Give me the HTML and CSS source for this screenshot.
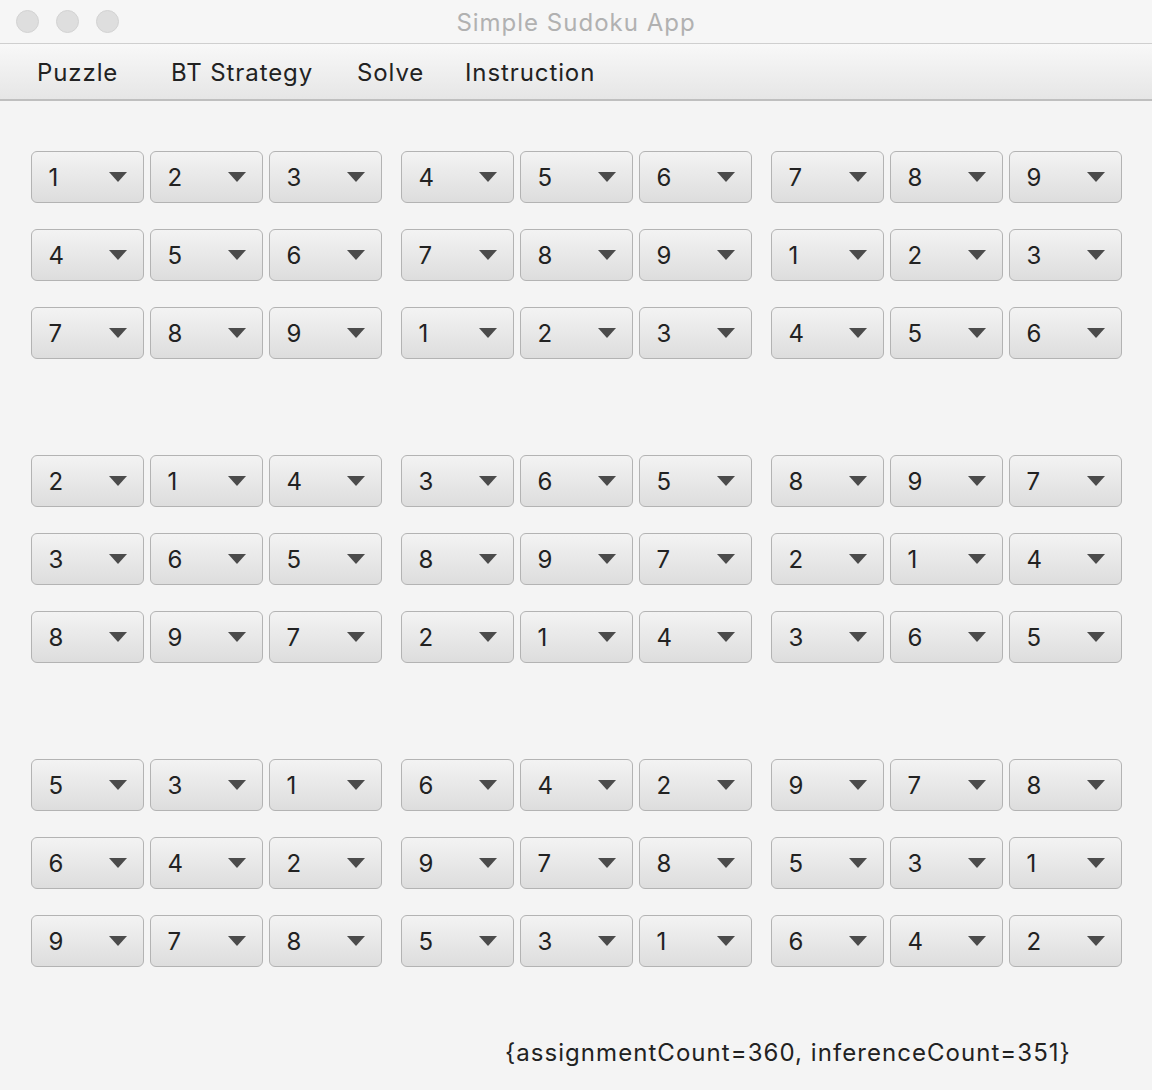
FILE: index.html
```html
<!DOCTYPE html>
<html>
<head>
<meta charset="utf-8">
<link rel="stylesheet" href="styles.css">
</head>
<body>
<div class="window">
  <div class="titlebar">
    <div class="lights"><span class="light"></span><span class="light"></span><span class="light"></span></div>
    <div class="title">Simple Sudoku App</div>
  </div>
  <div class="menubar">
    <span class="menu">Puzzle</span>
    <span class="menu">BT Strategy</span>
    <span class="menu">Solve</span>
    <span class="menu">Instruction</span>
  </div>
  <div class="content">
    <div class="board" id="board"></div>
    <div class="footer">{assignmentCount=360, inferenceCount=351}</div>
  </div>
</div>
<script src="app.js"></script>
</body>
</html>
```
FILE: app.js
```js
var rows = [
  [1,2,3,4,5,6,7,8,9],
  [4,5,6,7,8,9,1,2,3],
  [7,8,9,1,2,3,4,5,6],
  [2,1,4,3,6,5,8,9,7],
  [3,6,5,8,9,7,2,1,4],
  [8,9,7,2,1,4,3,6,5],
  [5,3,1,6,4,2,9,7,8],
  [6,4,2,9,7,8,5,3,1],
  [9,7,8,5,3,1,6,4,2]
];
var board = document.getElementById('board');
for (var br = 0; br < 3; br++) {
  var band = document.createElement('div');
  band.className = 'band';
  for (var bc = 0; bc < 3; bc++) {
    var block = document.createElement('div');
    block.className = 'block';
    for (var r = 0; r < 3; r++) {
      for (var c = 0; c < 3; c++) {
        var cell = document.createElement('div');
        cell.className = 'cell';
        var v = document.createElement('span');
        v.className = 'value';
        v.textContent = rows[br * 3 + r][bc * 3 + c];
        var a = document.createElement('span');
        a.className = 'arrow';
        cell.appendChild(v);
        cell.appendChild(a);
        block.appendChild(cell);
      }
    }
    band.appendChild(block);
  }
  board.appendChild(band);
}
```
FILE: styles.css
```css
html, body {
  margin: 0;
  padding: 0;
  background: #f4f4f4;
}
body {
  font-family: Inter, "Liberation Sans", sans-serif;
  color: #222;
}
.window {
  width: 1152px;
  height: 1090px;
  background: #f4f4f4;
}
.titlebar {
  height: 43px;
  background: #f6f6f6;
  border-bottom: 1px solid #cfcfcf;
  display: flex;
  align-items: center;
  position: relative;
}
.lights {
  display: flex;
  gap: 17px;
  padding-left: 16px;
}
.light {
  width: 23px;
  height: 23px;
  border-radius: 50%;
  background: #dedede;
  box-sizing: border-box;
  border: 1px solid #d3d3d3;
}
.title {
  position: absolute;
  left: 0;
  right: 0;
  top: 1px;
  line-height: 44px;
  text-align: center;
  font-size: 24px;
  letter-spacing: 1px;
  color: #b1b1b1;
  pointer-events: none;
}
.menubar {
  height: 57px;
  box-sizing: border-box;
  padding-top: 2px;
  background: linear-gradient(#f8f8f8, #e6e6e6);
  border-bottom: 2px solid #bfbfbf;
  display: grid;
  grid-template-columns: 134px 186px 108px auto;
  align-items: center;
  padding-left: 37px;
  font-size: 24px;
  letter-spacing: 0.9px;
  color: #222;
}
.content {
  padding: 50px 0 0 31px;
}
.board {
  display: flex;
  flex-direction: column;
  gap: 96px;
}
.band {
  display: flex;
  gap: 19px;
}
.block {
  display: grid;
  grid-template-columns: repeat(3, 113px);
  column-gap: 6px;
  row-gap: 26px;
}
.cell {
  height: 52px;
  box-sizing: border-box;
  border: 1.5px solid #b3b3b3;
  border-radius: 6px;
  background: linear-gradient(#f3f3f3, #dddddd);
  display: flex;
  align-items: center;
  padding-left: 16.5px;
  padding-right: 16px;
  font-size: 24px;
  color: #222;
}
.value {
  flex: 1;
}
.arrow {
  width: 0;
  height: 0;
  border-left: 9px solid transparent;
  border-right: 9px solid transparent;
  border-top: 10px solid #4b4b4b;
}
.footer {
  margin-top: 71px;
  padding-left: 474px;
  font-size: 24px;
  letter-spacing: 1.05px;
  line-height: 30px;
  color: #222;
}
```
